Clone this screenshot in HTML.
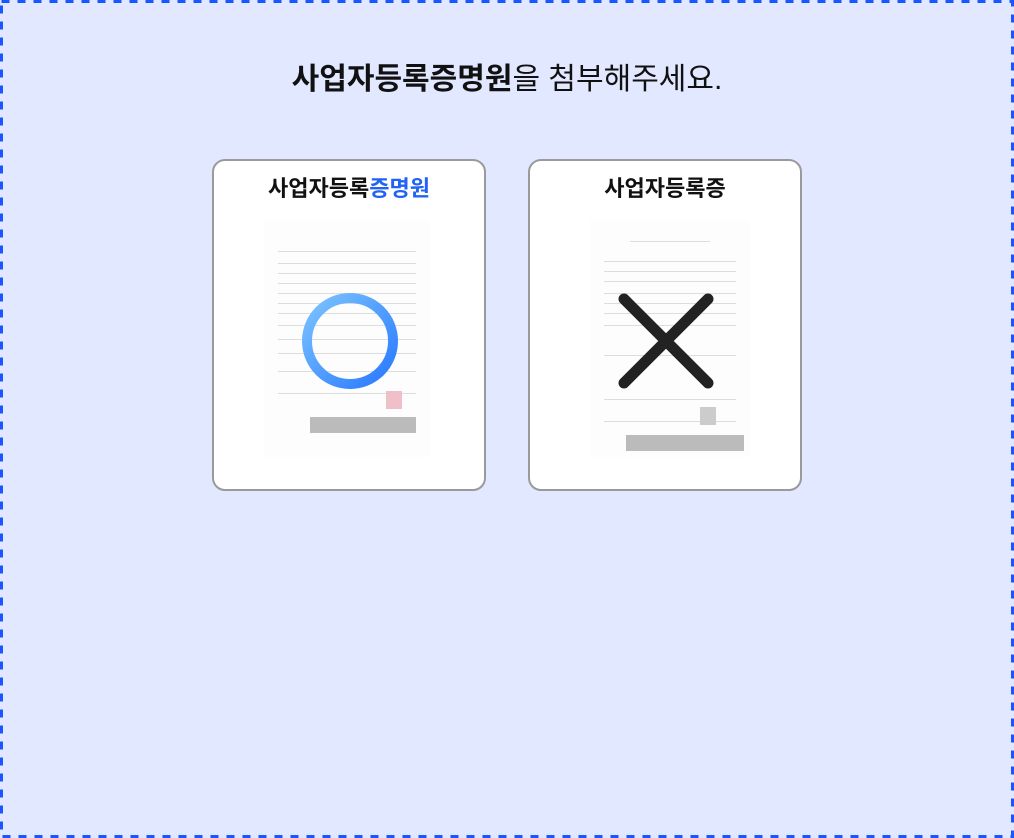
<!DOCTYPE html>
<html><head><meta charset="utf-8"><style>
body{margin:0;width:1014px;height:838px;background:#fff;font-family:"Liberation Sans","Noto Sans CJK KR",sans-serif;position:relative;overflow:hidden}
.bg{position:absolute;left:0;top:0;width:1014px;height:838px;background:#e2e8ff}
.t{position:absolute;top:61px;left:0;width:1014px;text-align:center;font-size:30px;color:#111;line-height:38px}
.card{position:absolute;top:159px;width:270px;height:328px;background:#fff;border:2px solid #9a9a9a;border-radius:13px}
.ct{position:absolute;top:13px;width:100%;text-align:center;font-size:22px;font-weight:bold;color:#111;line-height:30px}
.doc{position:absolute;top:60px;left:50px;width:166px;height:236px;background:#fdfdfd}
.doc i{position:absolute;left:14px;right:14px;height:1px;background:#ddd}
</style></head><body>
<div class="bg"></div>
<svg style="position:absolute;left:0;top:0" width="1014" height="838"><rect x="1.5" y="1.5" width="1011" height="835" fill="none" stroke="#1a56ff" stroke-width="3" stroke-dasharray="8 8"/></svg>
<div class="t"><b>사업자등록증명원</b>을 첨부해주세요.</div>
<div class="card" style="left:212px">
<div class="ct">사업자등록<span style="color:#2262f5">증명원</span></div>
<div class="doc">
<i style="top:30px"></i><i style="top:42px"></i><i style="top:52px"></i><i style="top:62px"></i><i style="top:72px"></i><i style="top:82px"></i><i style="top:92px"></i><i style="top:104px"></i><i style="top:118px"></i><i style="top:132px"></i><i style="top:150px"></i><i style="top:172px"></i>
<div style="position:absolute;left:46px;top:196px;width:106px;height:16px;background:#bbb"></div>
<div style="position:absolute;left:122px;top:170px;width:16px;height:18px;background:#f0c0c8"></div>
</div>
<svg style="position:absolute;left:84px;top:128px" width="104" height="104"><defs><linearGradient id="g" x1="0" y1="0" x2="1" y2="1"><stop offset="0" stop-color="#7cc4ff"/><stop offset="1" stop-color="#2878ff"/></linearGradient></defs><circle cx="52" cy="52" r="43" fill="none" stroke="url(#g)" stroke-width="10"/></svg>
</div>
<div class="card" style="left:528px">
<div class="ct">사업자등록증</div>
<div class="doc" style="left:60px;width:160px">
<i style="top:20px;left:40px;right:40px"></i><i style="top:40px"></i><i style="top:50px"></i><i style="top:60px"></i><i style="top:72px"></i><i style="top:82px"></i><i style="top:92px"></i><i style="top:104px"></i><i style="top:134px"></i><i style="top:178px"></i><i style="top:200px"></i>
<div style="position:absolute;left:36px;top:214px;width:118px;height:16px;background:#bbb"></div>
<div style="position:absolute;left:110px;top:186px;width:16px;height:18px;background:#ccc"></div>
</div>
<svg style="position:absolute;left:86px;top:130px" width="100" height="100"><path d="M8 8L92 92M92 8L8 92" stroke="#222" stroke-width="11" stroke-linecap="round"/></svg>
</div>
</body></html>
